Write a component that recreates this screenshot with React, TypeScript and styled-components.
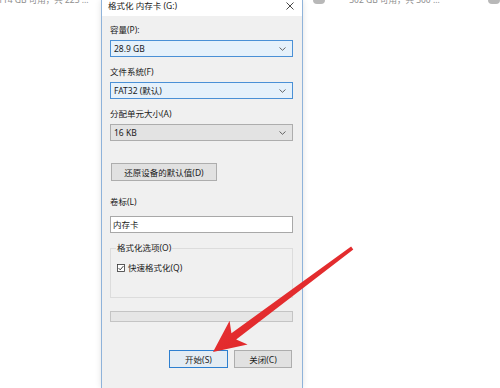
import React from "react";
import styled, { createGlobalStyle } from "styled-components";

const GlobalStyle = createGlobalStyle`
  html, body {
    margin: 0;
    padding: 0;
    background: #ffffff;
  }
  body {
    font-family: "Noto Sans", "Noto Sans CJK SC", sans-serif;
    font-size: 8.5px;
    color: #1a1a1a;
  }
`;

const Page = styled.div`
  position: relative;
  width: 500px;
  height: 388px;
  overflow: hidden;
  display: flex;
  flex-direction: row;
  background: #fff;
`;

const Side = styled.div<{ $width?: number }>`
  width: ${(p) => (p.$width ? `${p.$width}px` : "auto")};
  flex: ${(p) => (p.$width ? "none" : "1")};
  display: flex;
  flex-direction: row;
  align-items: flex-start;
  overflow: hidden;
`;

const DriveText = styled.span<{ $ml?: number }>`
  margin-top: -6px;
  margin-left: ${(p) => p.$ml ?? 0}px;
  line-height: 12px;
  font-size: 8.5px;
  color: #8e8e8e;
  white-space: nowrap;
`;

const DriveIcon = styled.div<{ $ml?: number }>`
  margin-left: ${(p) => p.$ml ?? 0}px;
  width: 17px;
  height: 4px;
  border-radius: 0 0 6px 6px;
  background: #b8b8b8;
`;

const Dialog = styled.div`
  width: 202px;
  flex: none;
  display: flex;
  flex-direction: column;
  border-left: 1px solid #8fb3da;
  border-right: 1px solid #8fb3da;
  box-sizing: border-box;
  box-shadow: 0 0 6px rgba(0, 0, 0, 0.12);
  background: #f0f0f0;
`;

const TitleBar = styled.div`
  height: 16px;
  background: #ffffff;
  display: flex;
  flex-direction: row;
  align-items: flex-start;
  justify-content: space-between;
  padding: 0 8px 0 6px;
`;

const Title = styled.span`
  line-height: 11px;
  font-size: 8.5px;
  color: #222;
`;

const CloseIcon = styled.svg`
  margin-top: 2px;
  width: 8px;
  height: 8px;
`;

const Body = styled.div`
  display: flex;
  flex-direction: column;
  padding: 8px 9px 0 8px;
`;

const Label = styled.div<{ $mt?: number; $mb?: number }>`
  margin-top: ${(p) => p.$mt ?? 0}px;
  margin-bottom: ${(p) => p.$mb ?? 4}px;
  line-height: 12px;
  white-space: nowrap;
`;

const Combo = styled.div<{ $active?: boolean }>`
  height: 17px;
  box-sizing: border-box;
  display: flex;
  flex-direction: row;
  align-items: center;
  justify-content: space-between;
  padding: 0 6px 0 3px;
  border: 1px solid ${(p) => (p.$active ? "#4a90d6" : "#adadad")};
  background: ${(p) => (p.$active ? "#e5f1fb" : "#e3e3e3")};
`;

const ComboValue = styled.span`
  line-height: 12px;
`;

const Chevron = styled.svg`
  width: 7px;
  height: 4px;
`;

const Button = styled.div<{ $width: number; $focused?: boolean }>`
  width: ${(p) => p.$width}px;
  height: 18px;
  box-sizing: border-box;
  display: flex;
  align-items: center;
  justify-content: center;
  border: 1px solid ${(p) => (p.$focused ? "#2d7fd0" : "#adadad")};
  background: ${(p) => (p.$focused ? "#e4ecf3" : "#e1e1e1")};
  white-space: nowrap;
`;

const RestoreRow = styled.div`
  margin-top: 22px;
  padding-left: 1px;
  display: flex;
`;

const TextInput = styled.div`
  height: 17px;
  box-sizing: border-box;
  border: 1px solid #a8a8a8;
  background: #ffffff;
  display: flex;
  align-items: center;
  padding-left: 2px;
  line-height: 12px;
`;

const Group = styled.fieldset`
  margin: 9px 0 0 0;
  padding: 8px 6px 0 6px;
  height: 56px;
  box-sizing: border-box;
  border: 1px solid #dcdcdc;
  display: flex;
  flex-direction: column;
`;

const Legend = styled.legend`
  padding: 0 1px;
  margin-left: -1px;
  line-height: 12px;
  font-size: 8.5px;
`;

const CheckRow = styled.div`
  display: flex;
  flex-direction: row;
  align-items: center;
  gap: 3px;
  line-height: 12px;
`;

const CheckBox = styled.svg`
  width: 8px;
  height: 8px;
`;

const Progress = styled.div`
  margin-top: 13px;
  height: 11px;
  box-sizing: border-box;
  border: 1px solid #c4c4c4;
  background: #e6e6e6;
`;

const ButtonRow = styled.div`
  margin-top: 28px;
  display: flex;
  flex-direction: row;
  justify-content: flex-end;
  gap: 6px;
  padding-right: 1px;
`;

const ArrowLayer = styled.svg`
  position: absolute;
  left: 0;
  top: 0;
  width: 500px;
  height: 388px;
  pointer-events: none;
`;

const ChevronDown = () => (
  <Chevron viewBox="0 0 7 4">
    <path d="M0.5 0.5 L3.5 3.3 L6.5 0.5" fill="none" stroke="#555" strokeWidth="0.9" />
  </Chevron>
);

export default function App() {
  return (
    <>
      <GlobalStyle />
      <Page>
        <Side $width={101}>
          <DriveText $ml={-2}>114 GB 可用，共 223 ...</DriveText>
        </Side>
        <Dialog>
          <TitleBar>
            <Title>格式化 内存卡 (G:)</Title>
            <CloseIcon viewBox="0 0 8 8">
              <path d="M0.5 0.5 L7.5 7.5 M7.5 0.5 L0.5 7.5" stroke="#333" strokeWidth="0.9" />
            </CloseIcon>
          </TitleBar>
          <Body>
            <Label>容量(P):</Label>
            <Combo $active>
              <ComboValue>28.9 GB</ComboValue>
              <ChevronDown />
            </Combo>

            <Label $mt={9}>文件系统(F)</Label>
            <Combo $active>
              <ComboValue>FAT32 (默认)</ComboValue>
              <ChevronDown />
            </Combo>

            <Label $mt={9}>分配单元大小(A)</Label>
            <Combo>
              <ComboValue>16 KB</ComboValue>
              <ChevronDown />
            </Combo>

            <RestoreRow>
              <Button $width={106}>还原设备的默认值(D)</Button>
            </RestoreRow>

            <Label $mt={15} $mb={8}>卷标(L)</Label>
            <TextInput>内存卡</TextInput>

            <Group>
              <Legend>格式化选项(O)</Legend>
              <CheckRow>
                <CheckBox viewBox="0 0 8 8">
                  <rect x="0.5" y="0.5" width="7" height="7" fill="#fff" stroke="#333" strokeWidth="0.8" />
                  <path d="M1.6 4.1 L3.2 5.8 L6.4 2.1" fill="none" stroke="#222" strokeWidth="0.9" />
                </CheckBox>
                <span>快速格式化(Q)</span>
              </CheckRow>
            </Group>

            <Progress />

            <ButtonRow>
              <Button $width={59} $focused>开始(S)</Button>
              <Button $width={58}>关闭(C)</Button>
            </ButtonRow>
          </Body>
        </Dialog>
        <Side>
          <DriveIcon $ml={10} />
          <DriveText $ml={24}>302 GB 可用，共 300 ...</DriveText>
          <DriveIcon $ml={48} />
        </Side>
        <ArrowLayer viewBox="0 0 500 388">
          <defs>
            <linearGradient id="arrowFill" x1="0" y1="0" x2="1" y2="1">
              <stop offset="0" stopColor="#ee3a3a" />
              <stop offset="1" stopColor="#d81e22" />
            </linearGradient>
          </defs>
          <polygon
            points="213,352 229.6,320.8 231.4,333.2 351.1,246.4 353.3,249.4 236.2,339.6 247.6,344.6"
            fill="url(#arrowFill)"
          />
        </ArrowLayer>
      </Page>
    </>
  );
}
